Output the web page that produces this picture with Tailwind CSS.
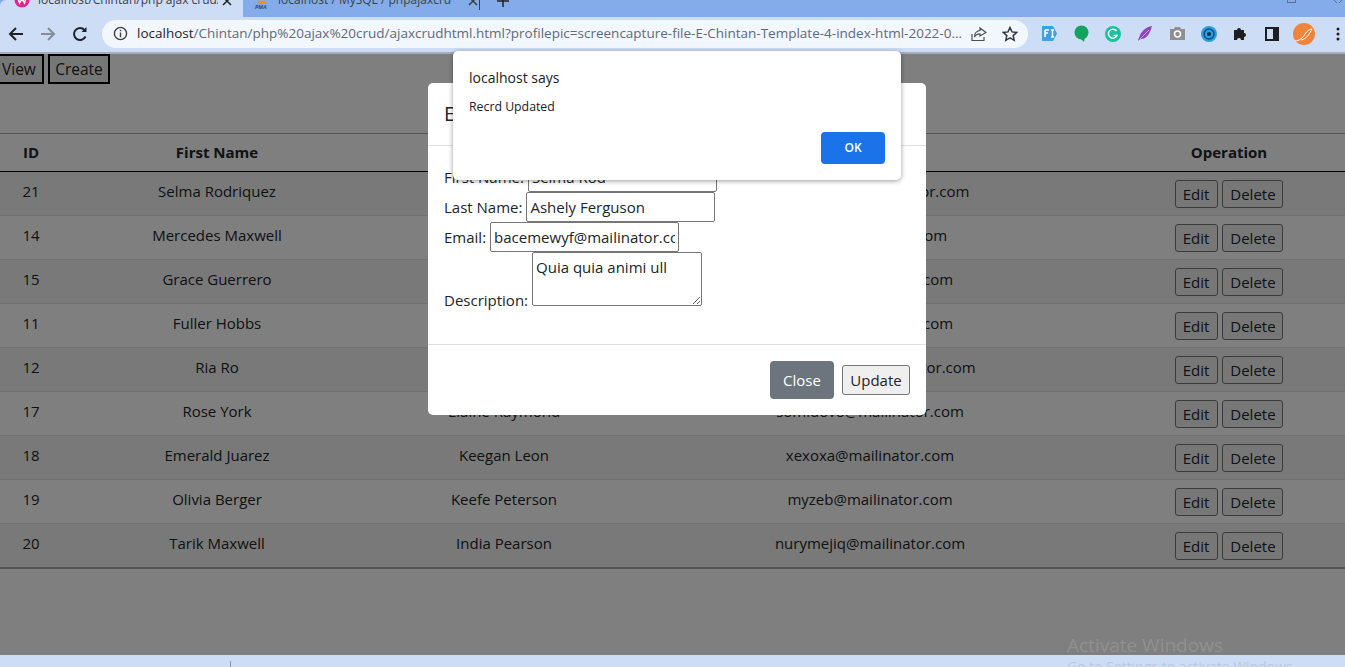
<!DOCTYPE html>
<html lang="en">
  <head>
    <meta charset="UTF-8" />
    <meta name="viewport" content="width=device-width, initial-scale=1.0" />
    <title>Ajax Crud</title>
    <script src="https://cdn.jsdelivr.net/npm/@tailwindcss/browser@4"></script>
  </head>
  <body class="relative h-screen overflow-hidden flex flex-col bg-white text-[#212529] font-['Open_Sans',sans-serif] text-[15px]">
    <!-- browser tabs, cut off by the top of the capture -->
    <div class="h-[17px] shrink-0 bg-[#84aceb] flex text-[12px] text-[#3c4043] overflow-hidden relative">
      <div class="w-[243px] bg-[#cdddf6] flex items-start pl-[14px] rounded-tl-md">
        <svg class="w-4 h-4 -mt-2" viewBox="0 0 16 16"><circle cx="8" cy="8" r="7.500" fill="#e5258d" /><path d="M4 6l1.500 5 2.500-4 2.500 4 1.500-5" fill="none" stroke="#fff" stroke-width="1.500" /></svg>
        <span class="ml-2 w-[180px] -mt-[9px] leading-[18px] whitespace-nowrap overflow-hidden">localhost/Chintan/php ajax crud/</span>
        <svg class="w-[10px] h-[10px] ml-[4px] -mt-[4px]" viewBox="0 0 10 10"><path d="M1 1l8 8M9 1l-8 8" stroke="#222" stroke-width="1.500" /></svg>
      </div>
      <div class="w-[236px] flex items-start pl-[11px] rounded-bl-lg bg-[#84aceb]">
        <svg class="w-[16px] h-[9px]" viewBox="0 0 16 9"><path d="M3 4l2-4 1 2 2-2 2 2 1-2 2 4z" fill="#e8912d" /><text x="1" y="9" font-size="5.500" font-weight="700" font-style="italic" fill="#3b4a6b">PMA</text></svg>
        <span class="ml-2 w-[174px] -mt-[9px] leading-[18px] whitespace-nowrap overflow-hidden">localhost / MySQL / phpajaxcrud</span>
        <svg class="w-[10px] h-[10px] ml-[16px] -mt-[4px]" viewBox="0 0 10 10"><path d="M1 1l8 8M9 1l-8 8" stroke="#3c4043" stroke-width="1.500" /></svg>
      </div>
      <div class="w-px h-[10px] bg-[#3c4043]"></div>
      <svg class="w-[12px] h-[12px] ml-[17px] -mt-[5px]" viewBox="0 0 12 12"><path d="M6 0v12M0 6h12" stroke="#222" stroke-width="1.500" /></svg>
      <div class="ml-auto flex items-start">
        <div class="w-[9px] h-[3px] border border-[#5f6f8a] border-t-0"></div>
        <svg class="w-[8px] h-[3px] ml-[38px] mr-[3px]" viewBox="0 0 8 3"><path d="M0 0l3 3M8 0l-3 3" stroke="#5f6f8a" /></svg>
      </div>
    </div>

    <!-- address bar -->
    <div class="h-[37px] shrink-0 bg-[#cdddf6] border-b-2 border-[#a3adbd] flex items-center pb-[2px]">
      <svg class="w-4 h-4 ml-[8px]" viewBox="0 0 16 16" fill="none" stroke="#1f2328" stroke-width="2"><path d="M15 8H2M8 2L2 8l6 6" /></svg>
      <svg class="w-4 h-4 ml-[16px]" viewBox="0 0 16 16" fill="none" stroke="#858c98" stroke-width="2"><path d="M1 8h13M8 2l6 6-6 6" /></svg>
      <svg class="w-4 h-4 ml-[16px]" viewBox="0 0 16 16" fill="none" stroke="#1f2328" stroke-width="2"><path d="M13.500 10.500A6 6 0 1 1 12.500 4" /><path d="M14.500 1v5h-5" fill="#1f2328" stroke="none" /></svg>
      <div class="ml-[14px] w-[926px] h-[28px] rounded-full bg-[#f2f6fd] flex items-center pl-[11px] pr-[10px]">
        <svg class="w-[15px] h-[15px] shrink-0" viewBox="0 0 16 16" fill="none" stroke="#3c4043" stroke-width="1.500"><circle cx="8" cy="8" r="6.500" /><path d="M8 7v5M8 4v1.500" /></svg>
        <span class="ml-[9px] w-[829px] shrink-0 text-[13.500px] text-[#5f6a7a] whitespace-nowrap overflow-hidden"><span class="text-[#1f2328]">localhost</span>/Chintan/php%20ajax%20crud/ajaxcrudhtml.html?profilepic=screencapture-file-E-Chintan-Template-4-index-html-2022-0...</span>
        <svg class="w-4 h-4 ml-[5px] shrink-0" viewBox="0 0 16 16" fill="none" stroke="#4a4f57" stroke-width="1.200"><path d="M1 8v6.500h12V11" /><path d="M9 2l6 4.500L9 10V7.800C6 7.800 4.500 9 3.500 11 3.500 7 5.500 5 9 4.500z" /></svg>
        <svg class="w-4 h-4 ml-[15px] shrink-0" viewBox="0 0 16 16" fill="none" stroke="#33373d" stroke-width="1.500"><path d="M8 1.500l2 4.400 4.800.5-3.600 3.200 1 4.700L8 11.900l-4.200 2.400 1-4.700L1.200 6.400 6 5.900z" /></svg>
      </div>
      <svg class="w-[17px] h-[17px] ml-[13px]" viewBox="0 0 17 17"><path d="M1 1h11l4 7.500-4 7.500H1z" fill="#41a0e0" /><path d="M4 5h4M4 5v7M4 8h3M10 5h3M10 12h3M11.500 5v7" stroke="#fff" stroke-width="1.500" fill="none" /></svg>
      <svg class="w-[15px] h-[17px] ml-[16px]" viewBox="0 0 15 17"><circle cx="7.500" cy="7.500" r="7" fill="#13a35d" /><path d="M6 13l4 4 1-5z" fill="#13a35d" /></svg>
      <svg class="w-4 h-4 ml-[16px]" viewBox="0 0 16 16" fill="none"><circle cx="8" cy="8" r="8" fill="#15c39a" /><path d="M11.500 5A4.500 4.500 0 1 0 12 9.500H8.500" stroke="#fff" stroke-width="1.500" /></svg>
      <svg class="w-[16px] h-[17px] ml-[16px]" viewBox="0 0 16 17"><path d="M15 1C9 2 4 6 2 13c-1 1-1 3-1 3 1-1 2-2 3-2 6 0 9-6 11-13z" fill="#8e44bd" /><path d="M12 5L3 14" stroke="#c9a4e2" /></svg>
      <svg class="w-[15px] h-[13px] ml-[17px]" viewBox="0 0 15 13"><path d="M0 2h4l1-2h5l1 2h4v11H0z" fill="#8f8f8f" /><circle cx="7.500" cy="7" r="3" fill="none" stroke="#fff" stroke-width="1.500" /></svg>
      <svg class="w-4 h-4 ml-[16px]" viewBox="0 0 16 16" fill="none"><circle cx="8" cy="8" r="8" fill="#2a9fe0" /><circle cx="8" cy="8" r="5" stroke="#0c4f80" stroke-width="1.500" /><circle cx="8" cy="8" r="2" fill="#12293d" /></svg>
      <svg class="w-[15px] h-[15px] ml-[16px]" viewBox="0 0 15 15"><path d="M1 4h3a2 2 0 1 1 4 0h3v3a2 2 0 1 1 0 4v3H8a2 2 0 1 0-4 0H1z" fill="#1c1e21" /></svg>
      <svg class="w-[14px] h-[14px] ml-[17px]" viewBox="0 0 14 14"><path fill-rule="evenodd" d="M0 0h14v14H0zM2 2v10h6V2z" fill="#1c1e21" /></svg>
      <svg class="w-[22px] h-[22px] ml-[14px]" viewBox="0 0 22 22" fill="none"><circle cx="11" cy="11" r="11" fill="#f0843a" /><path d="M2 18C6 18 10 15 12 11 14 8 17 6 19 6 17 10 14 16 8 17" stroke="#fff" stroke-width="1" /></svg>
      <svg class="w-[4px] h-[14px] ml-[21px]" viewBox="0 0 4 14"><circle cx="2" cy="2" r="1.500" fill="#1c1e21" /><circle cx="2" cy="7" r="1.500" fill="#1c1e21" /><circle cx="2" cy="12" r="1.500" fill="#1c1e21" /></svg>
    </div>

    <!-- page -->
    <div class="flex-1 relative overflow-hidden">
      <div class="h-[30px] flex gap-[4px] -ml-[6px] text-[15.500px]">
        <button class="w-[50px] border-2 border-black pl-[6px] pt-px text-left bg-[#efefef]">View</button>
        <button class="w-[62px] border-2 border-black pt-px bg-[#efefef]">Create</button>
      </div>

      <table class="mt-[49px] w-full table-fixed border-t border-[#a8a8a8] border-b-2 border-b-[#a8a8a8] text-center">
        <colgroup>
          <col class="w-[62px]" />
          <col class="w-[310px]" />
          <col class="w-[264px]" />
          <col class="w-[477px]" />
          <col />
        </colgroup>
        <thead>
          <tr class="h-[38px] font-bold border-b border-[#000]">
            <th>ID</th>
            <th>First Name</th>
            <th>Last Name</th>
            <th class="pr-[9px]">Email</th>
            <th>Operation</th>
          </tr>
        </thead>
        <tbody>
          <tr class="h-[44px] bg-[#f2f2f2] border-b border-[#dee2e6]">
            <td class="align-top pt-[8px]">21</td>
            <td class="align-top pt-[8px]">Selma Rodriquez</td>
            <td class="align-top pt-[8px]">Ashely Ferguson</td>
            <td class="align-top pt-[8px] pr-[9px]">bacemewyf@mailinator.com</td>
            <td class="align-top pt-[8px]"><button class="h-[28px] w-[43px] mr-px border border-[#767676] rounded-[3px] bg-[#efefef]">Edit</button> <button class="h-[28px] w-[61px] border border-[#767676] rounded-[3px] bg-[#efefef]">Delete</button></td>
          </tr>
          <tr class="h-[44px] border-b border-[#dee2e6]">
            <td class="align-top pt-[8px]">14</td>
            <td class="align-top pt-[8px]">Mercedes Maxwell</td>
            <td class="align-top pt-[8px]"></td>
            <td class="align-top pt-[8px] pr-[9px]">lemu@mailinator.com</td>
            <td class="align-top pt-[8px]"><button class="h-[28px] w-[43px] mr-px border border-[#767676] rounded-[3px] bg-[#efefef]">Edit</button> <button class="h-[28px] w-[61px] border border-[#767676] rounded-[3px] bg-[#efefef]">Delete</button></td>
          </tr>
          <tr class="h-[44px] bg-[#f2f2f2] border-b border-[#dee2e6]">
            <td class="align-top pt-[8px]">15</td>
            <td class="align-top pt-[8px]">Grace Guerrero</td>
            <td class="align-top pt-[8px]"></td>
            <td class="align-top pt-[8px] pr-[9px]">xufaqy@mailinator.com</td>
            <td class="align-top pt-[8px]"><button class="h-[28px] w-[43px] mr-px border border-[#767676] rounded-[3px] bg-[#efefef]">Edit</button> <button class="h-[28px] w-[61px] border border-[#767676] rounded-[3px] bg-[#efefef]">Delete</button></td>
          </tr>
          <tr class="h-[44px] border-b border-[#dee2e6]">
            <td class="align-top pt-[8px]">11</td>
            <td class="align-top pt-[8px]">Fuller Hobbs</td>
            <td class="align-top pt-[8px]"></td>
            <td class="align-top pt-[8px] pr-[9px]">gedalu@mailinator.com</td>
            <td class="align-top pt-[8px]"><button class="h-[28px] w-[43px] mr-px border border-[#767676] rounded-[3px] bg-[#efefef]">Edit</button> <button class="h-[28px] w-[61px] border border-[#767676] rounded-[3px] bg-[#efefef]">Delete</button></td>
          </tr>
          <tr class="h-[44px] bg-[#f2f2f2] border-b border-[#dee2e6]">
            <td class="align-top pt-[8px]">12</td>
            <td class="align-top pt-[8px]">Ria Ro</td>
            <td class="align-top pt-[8px]"></td>
            <td class="align-top pt-[8px] pr-[9px]">jujuvaqakyhe@mailinator.com</td>
            <td class="align-top pt-[8px]"><button class="h-[28px] w-[43px] mr-px border border-[#767676] rounded-[3px] bg-[#efefef]">Edit</button> <button class="h-[28px] w-[61px] border border-[#767676] rounded-[3px] bg-[#efefef]">Delete</button></td>
          </tr>
          <tr class="h-[44px] border-b border-[#dee2e6]">
            <td class="align-top pt-[8px]">17</td>
            <td class="align-top pt-[8px]">Rose York</td>
            <td class="align-top pt-[8px]">Elaine Raymond</td>
            <td class="align-top pt-[8px] pr-[9px]">somidovo@mailinator.com</td>
            <td class="align-top pt-[8px]"><button class="h-[28px] w-[43px] mr-px border border-[#767676] rounded-[3px] bg-[#efefef]">Edit</button> <button class="h-[28px] w-[61px] border border-[#767676] rounded-[3px] bg-[#efefef]">Delete</button></td>
          </tr>
          <tr class="h-[44px] bg-[#f2f2f2] border-b border-[#dee2e6]">
            <td class="align-top pt-[8px]">18</td>
            <td class="align-top pt-[8px]">Emerald Juarez</td>
            <td class="align-top pt-[8px]">Keegan Leon</td>
            <td class="align-top pt-[8px] pr-[9px]">xexoxa@mailinator.com</td>
            <td class="align-top pt-[8px]"><button class="h-[28px] w-[43px] mr-px border border-[#767676] rounded-[3px] bg-[#efefef]">Edit</button> <button class="h-[28px] w-[61px] border border-[#767676] rounded-[3px] bg-[#efefef]">Delete</button></td>
          </tr>
          <tr class="h-[44px] border-b border-[#dee2e6]">
            <td class="align-top pt-[8px]">19</td>
            <td class="align-top pt-[8px]">Olivia Berger</td>
            <td class="align-top pt-[8px]">Keefe Peterson</td>
            <td class="align-top pt-[8px] pr-[9px]">myzeb@mailinator.com</td>
            <td class="align-top pt-[8px]"><button class="h-[28px] w-[43px] mr-px border border-[#767676] rounded-[3px] bg-[#efefef]">Edit</button> <button class="h-[28px] w-[61px] border border-[#767676] rounded-[3px] bg-[#efefef]">Delete</button></td>
          </tr>
          <tr class="h-[44px] bg-[#f2f2f2]">
            <td class="align-top pt-[8px]">20</td>
            <td class="align-top pt-[8px]">Tarik Maxwell</td>
            <td class="align-top pt-[8px]">India Pearson</td>
            <td class="align-top pt-[8px] pr-[9px]">nurymejiq@mailinator.com</td>
            <td class="align-top pt-[8px]"><button class="h-[28px] w-[43px] mr-px border border-[#767676] rounded-[3px] bg-[#efefef]">Edit</button> <button class="h-[28px] w-[61px] border border-[#767676] rounded-[3px] bg-[#efefef]">Delete</button></td>
          </tr>
        </tbody>
      </table>

      <!-- modal backdrop -->
      <div class="absolute inset-0 bg-black/50"></div>

      <div class="absolute left-[1067px] top-[579px] text-[19px] leading-[24px] text-white/15 whitespace-nowrap">Activate Windows</div>

      <!-- edit modal -->
      <div class="absolute left-[428px] top-[29px] w-[498px] h-[332px] bg-white rounded-[5px] flex flex-col">
        <div class="h-[63px] shrink-0 border-b border-[#dee2e6] pl-[16px] flex items-center text-[20px] font-medium">Edit Record</div>
        <div class="flex-1 pl-[16px] pt-[16px] text-[#212529]">
          <div class="h-[30px] flex items-center gap-[4px]"><label>First Name:</label><input value="Selma Rod" class="w-[189px] h-[30px] border border-[#767676] rounded-[2px] px-[3px]" /></div>
          <div class="h-[30px] flex items-center gap-[4px]"><label>Last Name:</label><input value="Ashely Ferguson" class="w-[189px] h-[30px] border border-[#767676] rounded-[2px] px-[3px]" /></div>
          <div class="h-[30px] flex items-center gap-[4px]"><label>Email:</label><input value="bacemewyf@mailinator.com" class="w-[189px] h-[30px] border border-[#767676] rounded-[2px] px-[3px]" /></div>
          <div class="flex items-end gap-[4px]"><label class="leading-[22px] -mb-[5px]">Description:</label><textarea class="w-[170px] h-[54px] border border-[#767676] rounded-[2px] px-[3px] pt-[3px] leading-[22px]">Quia quia animi ull</textarea></div>
        </div>
        <div class="h-[71px] shrink-0 border-t border-[#dee2e6] flex items-center justify-end gap-[8px] pr-[16px]">
          <button class="w-[64px] h-[38px] rounded-[4px] bg-[#6c757d] text-white">Close</button>
          <button class="w-[68px] h-[30px] border border-[#767676] rounded-[3px] bg-[#efefef]">Update</button>
        </div>
      </div>
    </div>

    <!-- downloads bar, cut off by the bottom of the capture -->
    <div class="h-[12px] shrink-0 bg-[#cdddf6] relative overflow-hidden">
      <div class="absolute left-[230px] top-[6px] w-px h-[6px] bg-[#8a94a3]"></div>
      <div class="absolute left-[1067px] top-[3px] text-[14px] leading-[18px] text-[#bcc8da] whitespace-nowrap">Go to Settings to activate Windows.</div>
    </div>

    <!-- browser alert, sits over the address bar too -->
    <div class="absolute left-[453px] top-[51px] w-[448px] h-[129px] bg-white rounded-[5px] shadow-[0_1px_5px_rgba(0,0,0,0.4)] px-[16px] pt-[17px] flex flex-col">
      <div class="text-[14px] leading-[20px] text-[#202124]">localhost says</div>
      <div class="mt-[11px] text-[12.300px] leading-[16px] text-[#202124]">Recrd Updated</div>
      <button class="mt-auto mb-[16px] ml-auto w-[64px] h-[32px] rounded-[4px] bg-[#1a73e8] text-white text-[12px] font-semibold">OK</button>
    </div>
  </body>
</html>
